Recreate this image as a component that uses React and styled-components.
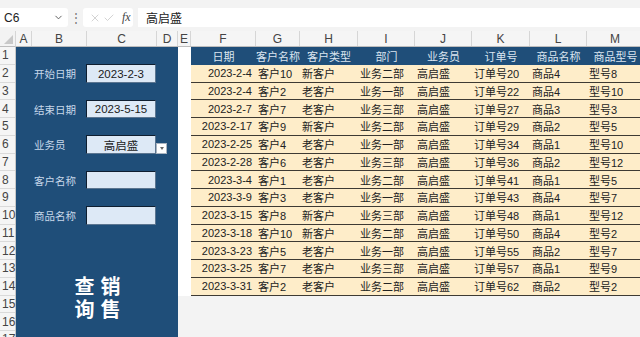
import { Fragment } from 'react'
import styled, { createGlobalStyle } from 'styled-components'
import { ChevronDown, X, Check } from 'lucide-react'

const GlobalStyle = createGlobalStyle`
    html, body {
        margin: 0;
        padding: 0;
        background: #f3f3f3;
        overflow: hidden;
    }
    * {
        box-sizing: border-box;
    }
    body {
        font-family: "Liberation Sans", "Noto Sans CJK SC", sans-serif;
    }
`;

const ROW_H = 17.75;

const columns = [
    { key: 'A', w: 16 },
    { key: 'B', w: 55 },
    { key: 'C', w: 70 },
    { key: 'D', w: 21 },
    { key: 'E', w: 13 },
    { key: 'F', w: 65 },
    { key: 'G', w: 44 },
    { key: 'H', w: 58 },
    { key: 'I', w: 57 },
    { key: 'J', w: 57 },
    { key: 'K', w: 58 },
    { key: 'L', w: 57 },
    { key: 'M', w: 57 },
];

const headers = ['日期', '客户名称', '客户类型', '部门', '业务员', '订单号', '商品名称', '商品型号'];

const rows = [
    ['2023-2-4', '客户10', '新客户', '业务二部', '高启盛', '订单号20', '商品4', '型号8'],
    ['2023-2-4', '客户2', '老客户', '业务一部', '高启盛', '订单号22', '商品4', '型号10'],
    ['2023-2-7', '客户7', '老客户', '业务三部', '高启盛', '订单号27', '商品3', '型号3'],
    ['2023-2-17', '客户9', '新客户', '业务二部', '高启盛', '订单号29', '商品2', '型号5'],
    ['2023-2-25', '客户4', '老客户', '业务一部', '高启盛', '订单号34', '商品1', '型号10'],
    ['2023-2-28', '客户6', '老客户', '业务三部', '高启盛', '订单号36', '商品2', '型号12'],
    ['2023-3-4', '客户1', '老客户', '业务二部', '高启盛', '订单号41', '商品1', '型号5'],
    ['2023-3-9', '客户3', '老客户', '业务一部', '高启盛', '订单号43', '商品4', '型号7'],
    ['2023-3-15', '客户8', '新客户', '业务三部', '高启盛', '订单号48', '商品1', '型号12'],
    ['2023-3-18', '客户10', '新客户', '业务二部', '高启盛', '订单号50', '商品4', '型号2'],
    ['2023-3-23', '客户5', '老客户', '业务一部', '高启盛', '订单号55', '商品2', '型号7'],
    ['2023-3-25', '客户7', '老客户', '业务三部', '高启盛', '订单号57', '商品1', '型号9'],
    ['2023-3-31', '客户2', '老客户', '业务二部', '高启盛', '订单号62', '商品2', '型号2'],
];

const fields = [
    { row: 2, label: '开始日期', value: '2023-2-3' },
    { row: 4, label: '结束日期', value: '2023-5-15' },
    { row: 6, label: '业务员', value: '高启盛', dropdown: true },
    { row: 8, label: '客户名称', value: '' },
    { row: 10, label: '商品名称', value: '' },
];

const Page = styled.div`
    width: 640px;
    height: 337px;
    overflow: hidden;
    background: #f3f3f3;
`;

/* formula bar */
const FormulaBar = styled.div`
    height: 31px;
    display: flex;
    align-items: flex-start;
    padding-top: 8px;
    background: #f3f3f3;
`;

const NameBox = styled.div`
    width: 68px;
    height: 19px;
    background: #fff;
    border-radius: 0 3px 3px 0;
    display: flex;
    align-items: center;
    justify-content: space-between;
    padding: 0 4px;
    font-size: 12px;
    color: #222;
`;

const Dots = styled.div`
    width: 15px;
    height: 19px;
    display: flex;
    align-items: center;
    justify-content: center;
    color: #777;
    font-size: 12px;
`;

const FxBox = styled.div`
    width: 50px;
    height: 19px;
    background: #fff;
    border-radius: 3px;
    display: flex;
    align-items: center;
    gap: 2px;
    padding-left: 6px;
    color: #c4c4c4;
`;

const Fx = styled.span`
    font-family: "Liberation Serif", serif;
    font-style: italic;
    font-size: 12px;
    color: #444;
    margin-left: 5px;
`;

const FormulaInput = styled.div`
    flex: 1;
    height: 19px;
    margin-left: 5px;
    background: #fff;
    display: flex;
    align-items: center;
    padding-left: 8px;
    font-size: 12px;
    font-family: "Noto Sans CJK SC", sans-serif;
    color: #222;
`;

/* sheet */
const Sheet = styled.div`
    display: grid;
    grid-template-columns: 16px 1fr;
    grid-template-rows: 16px auto;
`;

const Corner = styled.div`
    position: relative;
    background: #f3f3f3;
    border-right: 1px solid #d6d6d6;
    border-bottom: 1px solid #bdbdbd;
    &::after {
        content: '';
        position: absolute;
        right: 2px;
        bottom: 2px;
        border-left: 9px solid transparent;
        border-bottom: 9px solid #c8c8c8;
    }
`;

const ColHeaders = styled.div`
    display: flex;
    border-bottom: 1px solid #bdbdbd;
    background: #f5f5f5;
`;

const ColHead = styled.div`
    flex: none;
    width: ${p => p.$w}px;
    border-right: 1px solid #d6d6d6;
    display: flex;
    align-items: center;
    justify-content: center;
    font-size: 12px;
    color: #444;
`;

const RowHeaders = styled.div`
    display: flex;
    flex-direction: column;
    background: #f5f5f5;
    border-right: 1px solid #c8c8c8;
`;

const RowHead = styled.div`
    height: ${ROW_H}px;
    flex: none;
    border-bottom: 1px solid #dadada;
    display: flex;
    align-items: center;
    padding-left: 2px;
    font-size: 12px;
    color: #444;
`;

const Body = styled.div`
    display: flex;
    align-items: flex-start;
`;

const Panel = styled.div`
    flex: none;
    display: grid;
    grid-template-columns: 16px 55px 70px 21px;
    grid-template-rows: repeat(17, ${ROW_H}px);
    background: #1f4e79;
`;

const Label = styled.div`
    grid-column: 2;
    grid-row: ${p => p.$row};
    align-self: center;
    padding-left: 2px;
    font-family: "Noto Sans CJK SC", sans-serif;
    font-size: 10.5px;
    color: #c7d8ea;
    white-space: nowrap;
`;

const InputBox = styled.div`
    grid-column: 3;
    grid-row: ${p => p.$row};
    margin-left: -1px;
    width: 70px;
    height: 18.5px;
    align-self: center;
    background: #dde9f6;
    border: 1px solid #0e1e30;
    border-right-color: #5b7590;
    border-bottom-color: #5b7590;
    display: flex;
    align-items: center;
    justify-content: center;
    font-size: 11.5px;
    color: #1a1a1a;
    font-family: "Liberation Sans", "Noto Sans CJK SC", sans-serif;
`;

const DropButton = styled.div`
    grid-column: 4;
    grid-row: ${p => p.$row};
    align-self: end;
    margin: 0 0 0 -1px;
    width: 11px;
    height: 11px;
    background: #fff;
    border: 1px solid #aab4c0;
    display: flex;
    align-items: center;
    justify-content: center;
    &::after {
        content: '';
        border-left: 2.5px solid transparent;
        border-right: 2.5px solid transparent;
        border-top: 3px solid #666;
    }
`;

const TitleCell = styled.div`
    grid-column: 1 / 5;
    grid-row: 13 / 17;
    display: flex;
    justify-content: center;
    align-items: center;
    padding: 16px 0 0 0;
`;

const Title = styled.div`
    writing-mode: vertical-rl;
    font-family: "Noto Sans CJK SC", sans-serif;
    font-size: 20px;
    font-weight: 700;
    line-height: 26px;
    letter-spacing: 3px;
    color: #fff;
`;

const Gap = styled.div`
    flex: none;
    width: 13px;
    height: ${ROW_H * 14}px;
    background: #fff;
`;

const DataTable = styled.div`
    flex: none;
    display: flex;
    flex-direction: column;
`;

const DataRow = styled.div`
    display: grid;
    grid-template-columns: 65px 44px 58px 57px 57px 58px 57px 57px;
    height: ${ROW_H}px;
    background: ${p => (p.$head ? '#1f4e79' : '#feedc9')};
    border-bottom: ${p => (p.$head ? 'none' : '1px solid #3e3a33')};
    font-family: "Liberation Sans", "Noto Sans CJK SC", sans-serif;
    font-size: 11px;
    color: ${p => (p.$head ? '#dbe5f0' : '#222')};
`;

const Cell = styled.div`
    display: flex;
    align-items: center;
    white-space: nowrap;
    overflow: hidden;
    justify-content: ${p => (p.$align === 'right' ? 'flex-end' : p.$align === 'center' ? 'center' : 'flex-start')};
    padding: ${p => (p.$align === 'right' ? '0 4px 0 0' : p.$align === 'center' ? '0' : '0 0 0 2px')};
`;

function App() {
    return (
        <Page>
            <GlobalStyle />
            <FormulaBar>
                <NameBox>
                    <span>C6</span>
                    <ChevronDown size={11} color="#555" />
                </NameBox>
                <Dots>⋮</Dots>
                <FxBox>
                    <X size={12} strokeWidth={1.5} />
                    <Check size={12} strokeWidth={1.5} />
                    <Fx>fx</Fx>
                </FxBox>
                <FormulaInput>高启盛</FormulaInput>
            </FormulaBar>

            <Sheet>
                <Corner />
                <ColHeaders>
                    {columns.map(c => (
                        <ColHead key={c.key} $w={c.w}>{c.key}</ColHead>
                    ))}
                </ColHeaders>

                <RowHeaders>
                    {Array.from({ length: 17 }, (_, i) => (
                        <RowHead key={i}>{i + 1}</RowHead>
                    ))}
                </RowHeaders>

                <Body>
                    <Panel>
                        {fields.map(f => (
                            <Fragment key={f.label}>
                                <Label $row={f.row}>{f.label}</Label>
                                <InputBox $row={f.row}>{f.value}</InputBox>
                                {f.dropdown && <DropButton $row={f.row} />}
                            </Fragment>
                        ))}
                        <TitleCell>
                            <Title>销售查询</Title>
                        </TitleCell>
                    </Panel>

                    <Gap />

                    <DataTable>
                        <DataRow $head>
                            {headers.map(h => (
                                <Cell key={h} $align="center">{h}</Cell>
                            ))}
                        </DataRow>
                        {rows.map((r, i) => (
                            <DataRow key={i}>
                                {r.map((v, j) => (
                                    <Cell key={j} $align={j === 0 ? 'right' : 'left'}>{v}</Cell>
                                ))}
                            </DataRow>
                        ))}
                    </DataTable>
                </Body>
            </Sheet>
        </Page>
    )
}

export default App
